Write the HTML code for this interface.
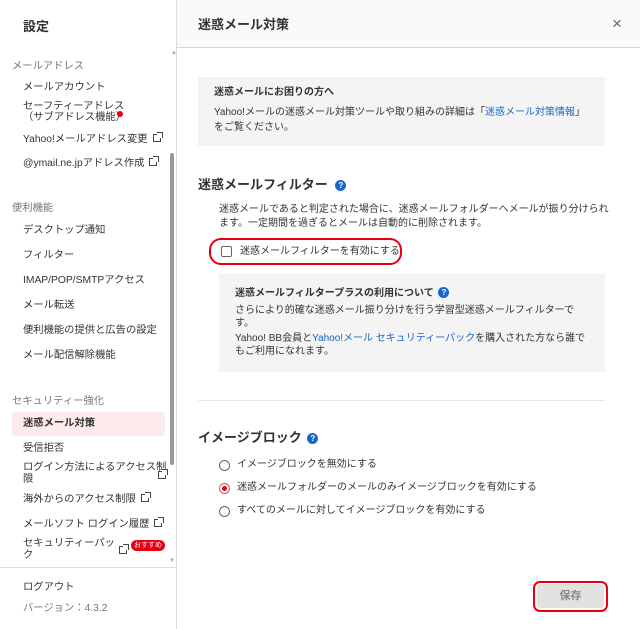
<!DOCTYPE html>
<html><head><meta charset="utf-8"><style>
*{margin:0;padding:0;box-sizing:border-box}
body{width:640px;height:629px;overflow:hidden;background:#fff;font-family:"Liberation Sans","Noto Sans CJK JP",sans-serif;color:#333;position:relative}
.a{position:absolute;white-space:nowrap;line-height:1}
.s{font-size:10.3px}
.m{font-size:10px}
.g{color:#777}
.b{font-weight:bold}
.ext{display:inline-block;width:8px;height:8px;border:1.2px solid #444;margin-left:5px;position:relative;vertical-align:0}
.ext:after{content:"";position:absolute;right:-3px;top:-3px;width:5px;height:5px;border-top:1.5px solid #444;border-right:1.5px solid #444;background:#fff}
.q{display:inline-block;width:11px;height:11px;border-radius:50%;background:#1a66c9;color:#fff;font-size:8px;text-align:center;line-height:11px;font-weight:bold;vertical-align:1px}
.lk{color:#1a66c9}
.r{position:absolute;width:11px;height:11px;border:1px solid #666;border-radius:50%}
.t{font-size:13px}
</style></head><body>
<div style="position:absolute;left:0;top:0;width:177px;height:629px;border-right:1px solid #ddd;background:#fff"></div>
<div style="position:absolute;left:170px;top:153px;width:4px;height:312px;background:#999;border-radius:2px"></div>
<div class="a" style="left:171px;top:50px;font-size:6px;color:#aaa">▲</div>
<div class="a" style="left:169px;top:558px;font-size:6px;color:#aaa">▼</div>
<div style="position:absolute;left:0;top:567px;width:176px;height:1px;background:#ddd"></div>
<div class="a b t" style="left:23px;top:20px">設定</div>
<div class="a s g" style="left:12px;top:62px">メールアドレス</div>
<div class="a s" style="left:23px;top:83px">メールアカウント</div>
<div class="a s" style="left:23px;top:102px">セーフティーアドレス</div>
<div class="a s" style="left:23px;top:113px">（サブアドレス機能）</div>
<div style="position:absolute;left:117px;top:111px;width:6px;height:6px;border-radius:50%;background:#e60012"></div>
<div class="a s" style="left:23px;top:134px">Yahoo!メールアドレス変更<span class="ext"></span></div>
<div class="a s" style="left:23px;top:158px">@ymail.ne.jpアドレス作成<span class="ext"></span></div>
<div class="a s g" style="left:12px;top:204px">便利機能</div>
<div class="a s" style="left:23px;top:226px">デスクトップ通知</div>
<div class="a s" style="left:23px;top:251px">フィルター</div>
<div class="a s" style="left:23px;top:276px">IMAP/POP/SMTPアクセス</div>
<div class="a s" style="left:23px;top:301px">メール転送</div>
<div class="a s" style="left:23px;top:326px">便利機能の提供と広告の設定</div>
<div class="a s" style="left:23px;top:351px">メール配信解除機能</div>
<div class="a s g" style="left:12px;top:397px">セキュリティー強化</div>
<div style="position:absolute;left:12px;top:412px;width:153px;height:24px;background:#fdeaea;border-radius:3px"></div>
<div class="a s b" style="left:23px;top:419px">迷惑メール対策</div>
<div class="a s" style="left:23px;top:444px">受信拒否</div>
<div class="a s" style="left:23px;top:463px">ログイン方法によるアクセス制</div>
<div class="a s" style="left:23px;top:475px">限</div>
<div class="a" style="left:153px;top:467px"><span class="ext"></span></div>
<div class="a s" style="left:23px;top:494px">海外からのアクセス制限<span class="ext"></span></div>
<div class="a s" style="left:23px;top:519px">メールソフト ログイン履歴<span class="ext"></span></div>
<div class="a s" style="left:23px;top:539px">セキュリティーパッ</div>
<div class="a s" style="left:23px;top:551px">ク</div>
<div class="a" style="left:114px;top:542px"><span class="ext"></span></div>
<div class="a" style="left:131px;top:540px;width:34px;height:11px;border-radius:6px;background:#e60012;color:#fff;font-size:7px;line-height:11px;text-align:center">おすすめ</div>
<div class="a s" style="left:23px;top:583px">ログアウト</div>
<div class="a s g" style="left:23px;top:604px">バージョン：4.3.2</div>

<div style="position:absolute;left:177px;top:0;width:463px;height:48px;background:#fafafa;border-bottom:1px solid #d6d6d6"></div>
<div class="a b t" style="left:198px;top:18px">迷惑メール対策</div>
<div class="a" style="left:612px;top:15px;font-size:17px;color:#666">×</div>

<div style="position:absolute;left:198px;top:77px;width:407px;height:69px;background:#f4f4f4"></div>
<div class="a m b" style="left:214px;top:88px">迷惑メールにお困りの方へ</div>
<div class="a m" style="left:214px;top:108px">Yahoo!メールの迷惑メール対策ツールや取り組みの詳細は「<span class="lk">迷惑メール対策情報</span>」</div>
<div class="a m" style="left:214px;top:123px">をご覧ください。</div>

<div class="a b t" style="left:198px;top:178px">迷惑メールフィルター <span class="q" style="margin-left:4px">?</span></div>
<div class="a m" style="left:219px;top:205px">迷惑メールであると判定された場合に、迷惑メールフォルダーへメールが振り分けられ</div>
<div class="a m" style="left:219px;top:219px">ます。一定期間を過ぎるとメールは自動的に削除されます。</div>
<div style="position:absolute;left:209px;top:238px;width:193px;height:27px;border:2.5px solid #e60012;border-radius:12px"></div>
<div style="position:absolute;left:221px;top:246px;width:11px;height:11px;border:1px solid #666;border-radius:2px;background:#fff"></div>
<div class="a m" style="left:240px;top:247px">迷惑メールフィルターを有効にする</div>

<div style="position:absolute;left:219px;top:274px;width:386px;height:98px;background:#f4f4f4"></div>
<div class="a m b" style="left:235px;top:287px">迷惑メールフィルタープラスの利用について <span class="q" style="margin-left:2px">?</span></div>
<div class="a m" style="left:235px;top:306px">さらにより的確な迷惑メール振り分けを行う学習型迷惑メールフィルターで</div>
<div class="a m" style="left:235px;top:319px">す。</div>
<div class="a m" style="left:235px;top:334px">Yahoo! BB会員と<span class="lk">Yahoo!メール セキュリティーパック</span>を購入された方なら誰で</div>
<div class="a m" style="left:235px;top:347px">もご利用になれます。</div>

<div style="position:absolute;left:198px;top:400px;width:407px;height:1px;background:#e6e6e6"></div>

<div class="a b t" style="left:198px;top:431px">イメージブロック <span class="q" style="margin-left:2px">?</span></div>
<div class="r" style="left:219px;top:460px"></div>
<div class="a m" style="left:237px;top:460px">イメージブロックを無効にする</div>
<div class="r" style="left:219px;top:483px;border-color:#e05050"><div style="position:absolute;left:2px;top:2px;width:5px;height:5px;border-radius:50%;background:#e60012"></div></div>
<div class="a m" style="left:237px;top:483px">迷惑メールフォルダーのメールのみイメージブロックを有効にする</div>
<div class="r" style="left:219px;top:506px"></div>
<div class="a m" style="left:237px;top:506px">すべてのメールに対してイメージブロックを有効にする</div>

<div style="position:absolute;left:533px;top:581px;width:75px;height:31px;border:2.5px solid #e60012;border-radius:7px"></div>
<div style="position:absolute;left:537px;top:584px;width:67px;height:24px;background:#e2e2e2;border-radius:3px;color:#888;font-size:11px;font-weight:bold;text-align:center;line-height:24px">保存</div>
</body></html>
